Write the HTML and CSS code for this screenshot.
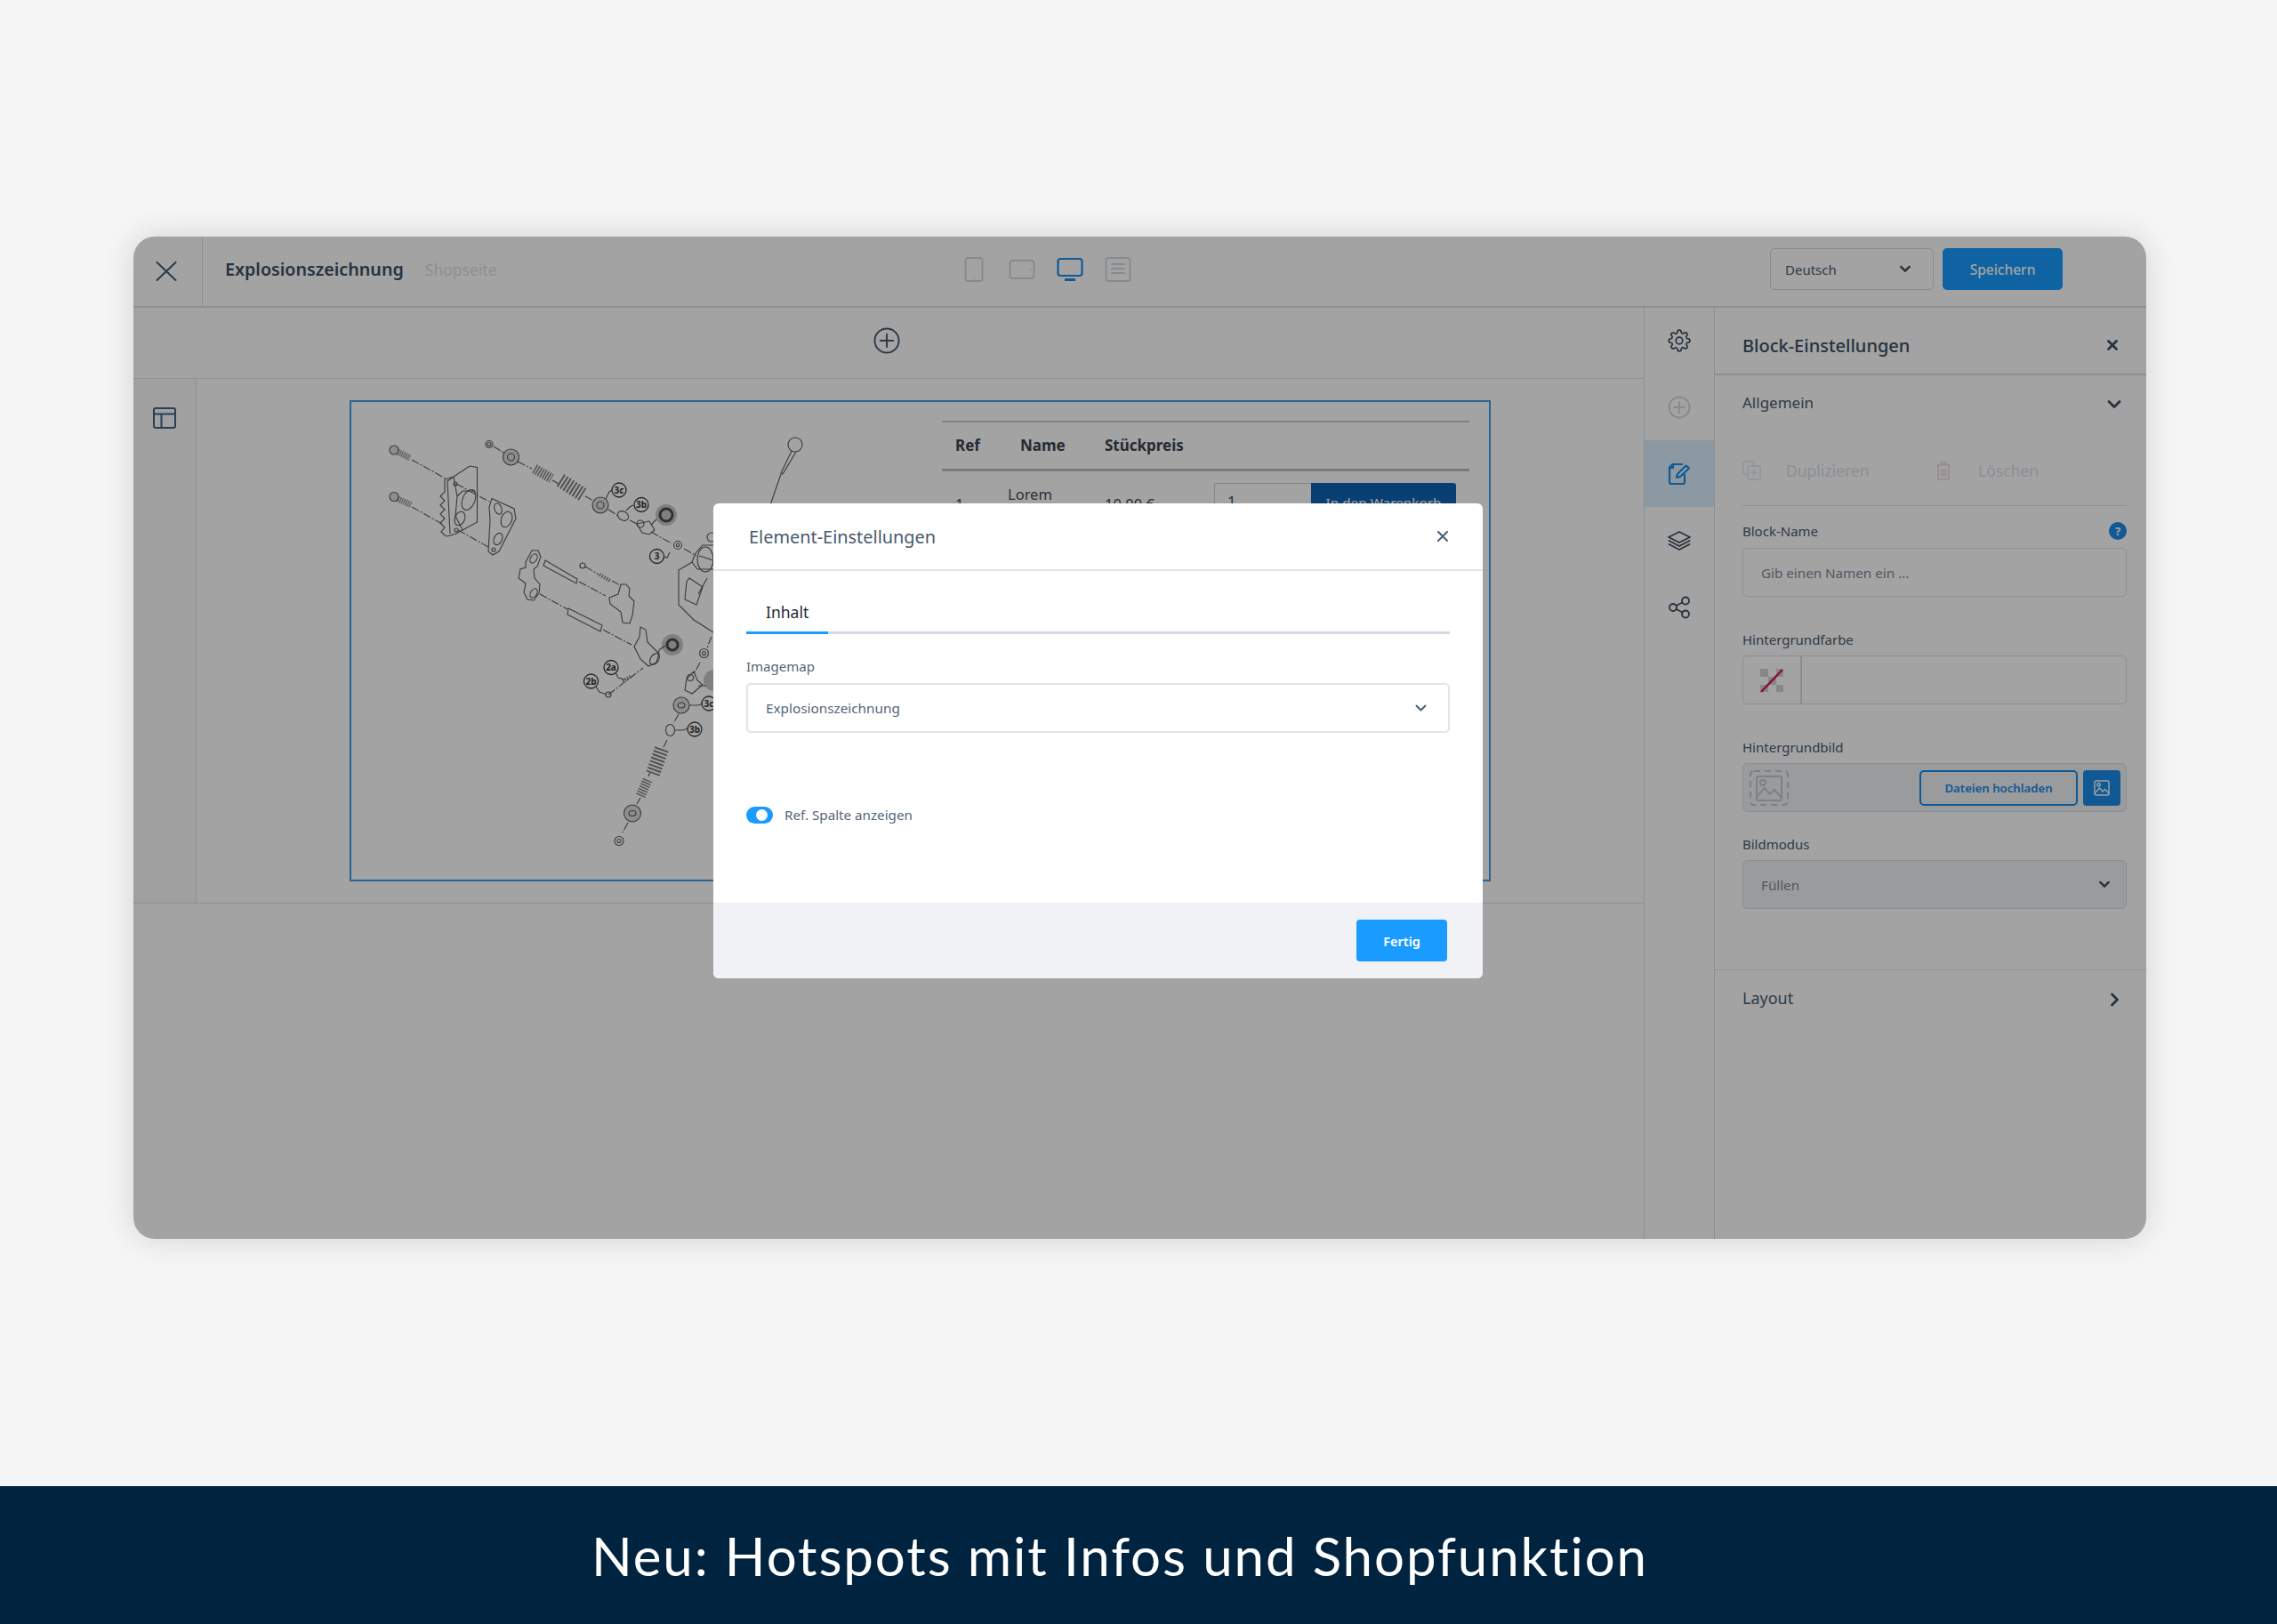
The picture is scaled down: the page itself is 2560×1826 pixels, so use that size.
FILE: index.html
```html
<!DOCTYPE html>
<html lang="de">
<head>
    <meta charset="UTF-8">
    <title>Explosionszeichnung</title>
    <link rel="stylesheet" href="styles.css">
</head>
<body>
<main class="stage-page">
<div class="app">
    <header class="topbar">
        <div class="close-cell">
            <svg width="24" height="22" viewBox="0 0 24 22"><path d="M1.500 1 22.500 21M22.500 1 1.500 21" class="ic"/></svg>
        </div>
        <div class="title-group">
            <span class="page-title">Explosionszeichnung</span>
            <span class="page-sub">Shopseite</span>
        </div>
        <div class="devices">
            <svg width="30" height="28" viewBox="0 0 30 28"><rect x="5.500" y="1" width="19" height="26" rx="3" class="ic-dis"/><circle cx="15" cy="24" r=".8" fill="#c8ced6"/></svg>
            <svg width="30" height="28" viewBox="0 0 30 28"><rect x="1.500" y="4" width="27" height="20" rx="3" class="ic-dis"/><circle cx="25" cy="14" r=".8" fill="#c8ced6"/></svg>
            <svg width="30" height="28" viewBox="0 0 30 28"><rect x="1.500" y="2" width="27" height="19" rx="3" class="ic-blue"/><rect x="9" y="24" width="12" height="3" fill="#1a8bea"/></svg>
            <svg width="30" height="28" viewBox="0 0 30 28"><rect x="1.500" y="1" width="27" height="26" rx="3" class="ic-dis"/><path d="M8 8h14M8 13h14M8 18h14" class="ic-dis" stroke-width="2"/></svg>
        </div>
        <div class="top-actions">
            <div class="lang-select">
                <span>Deutsch</span>
                <svg width="12" height="9" viewBox="0 0 14 10"><path d="M1.500 2 7 7.500 12.500 2" class="ic-bold"/></svg>
            </div>
            <button class="save-btn">Speichern</button>
        </div>
    </header>

    <div class="workspace">
        <section class="canvas">
            <div class="add-row">
                <svg width="30" height="30" viewBox="0 0 31 31"><circle cx="15.500" cy="15.500" r="14" class="ic"/><path d="M15.500 8v15M8 15.500h15" class="ic"/></svg>
            </div>
            <div class="stage">
                <div class="stage-strip">
                    <svg width="26" height="24" viewBox="0 0 26 24"><rect x="1" y="1" width="24" height="22" rx="2" class="ic-thin"/><path d="M1 7.500h24M9.500 7.500V23" class="ic-thin"/></svg>
                </div>
                <div class="block-frame">
                    <svg class="drawing" width="664" height="537" viewBox="395 452 664 537">
                        <g class="ln">
                            <!-- bolts and back plate -->
                            <path class="dash" d="M463 517 500 537.500M463 570 497 589M513 544 550 564M515 596 549 615"/>
                            <path class="shaft" d="M447 508 461 515M447 561 462 567.500"/>
                            <circle class="gr" cx="443" cy="506" r="5"/>
                            <circle class="gr" cx="443" cy="558.500" r="5"/>
                            <path d="M500 539 510 536 528 524 536.500 525.500V587L513 600 503 603 500 602 496 598 500 593 495 588 500 583 495 578 500 573 495 568 500 563 495 558 500 553 500 539Z"/>
                            <path d="M510 536 503 541 506 600M510 536 514 558 520 552 534 552M514 558 512 580 520 596"/>
                            <ellipse cx="527" cy="562" rx="7" ry="12" transform="rotate(22 527 562)"/>
                            <ellipse cx="517" cy="583" rx="5.500" ry="8" transform="rotate(22 517 583)"/>
                            <circle cx="512" cy="544" r="2"/>
                            <circle cx="513" cy="596" r="2"/>
                            <path d="M553 560.500 578 572 580 583 561 620 554 624 549 620 551 585 550 570Z"/>
                            <ellipse cx="560" cy="572" rx="4" ry="6.500" transform="rotate(-20 560 572)"/>
                            <ellipse cx="569.500" cy="584" rx="6" ry="9" transform="rotate(20 569.500 584)"/>
                            <ellipse cx="560" cy="606" rx="4.500" ry="7" transform="rotate(25 560 606)"/>
                            <circle cx="555" cy="618" r="2"/>

                            <!-- upper valve row -->
                            <path class="dash" d="M555 502 568 510M582 519 598 527M621 540 628 544M658 558 667 563M684 573 695 580M708 585 718 590M732 598 755 611M769 617 783 625"/>
                            <circle cx="550" cy="499.500" r="4"/>
                            <circle cx="550" cy="499.500" r="2"/>
                            <circle class="gr" cx="574.500" cy="514" r="9"/>
                            <circle cx="574.500" cy="514" r="4"/>
                            <path class="coil" d="M601 527 620 538"/>
                            <path class="coil big" d="M630 540 655 556"/>
                            <circle class="gr" cx="675" cy="568" r="9"/>
                            <circle cx="675" cy="568" r="4"/>
                            <path d="M681 561 685 553 688 551M704 574 708 570 712 568M732 590 738 584 742 581M753 621 750 627 746 626"/>
                            <ellipse cx="700.500" cy="580" rx="6.500" ry="5" transform="rotate(30 700.500 580)"/>
                            <path d="M716 589 730 586 736 596 730 601 722 599Z"/>
                            <circle cx="720" cy="589" r="4"/>
                            <circle cx="762" cy="613" r="4.500"/>
                            <circle cx="762" cy="613" r="1.800"/>
                            <circle class="halo" cx="749" cy="579" r="12"/>
                            <circle class="ring" cx="749" cy="579" r="7"/>

                            <!-- middle linkage -->
                            <path d="M591 632 598 619 605 619 608 626 604 637 600 640 601 650 607 657 606 667 600 675 593 674 589 666 591 656 583 650 585 640 591 638Z"/>
                            <ellipse cx="600" cy="628" rx="3.500" ry="5.500" transform="rotate(30 600 628)"/>
                            <ellipse cx="600" cy="667" rx="3.500" ry="5.500" transform="rotate(30 600 667)"/>
                            <path d="M613 630 649 651 648 656 611 636Z"/>
                            <path class="dash" d="M651 654 681 670M658 637 673 646M688 653 697 658M607 668 638 685M678 708 710 725M684 781 723 751"/>
                            <circle cx="655" cy="636" r="3"/>
                            <path class="coil thin" d="M674 646 686 653"/>
                            <path d="M698 657 704 657 708 662 707 670 713 676 711 692 708 701 700 700 698 688 686 679 685 672 695 668Z"/>
                            <path d="M639 684 677 703 675 710 638 691Z"/>
                            <path d="M720 705 726 708 728 722 741 735 738 745 729 749 720 741 713 727 719 716Z"/>
                            <ellipse cx="736" cy="741" rx="4.500" ry="7" transform="rotate(35 736 741)"/>
                            <circle class="halo" cx="756" cy="725" r="12"/>
                            <circle class="ring" cx="756" cy="725" r="6"/>
                            <path d="M739 735 742 730 748 726M692 756 695 762 702 764M670 772 674 778 682 781"/>
                            <path class="coil thin" d="M700 766 710 760"/>
                            <circle cx="684" cy="781" r="3"/>

                            <!-- housing, cut off by the dialog -->
                            <path d="M802 613 790 613 782 622 778 632 763 641 763 680 780 697 802 711"/>
                            <path d="M778 632 784 640 802 640M786 625 802 630M775 650 790 660 783 680 770 674 772 654ZM795 650 785 668"/>
                            <ellipse cx="793" cy="629" rx="9" ry="14"/>
                            <circle cx="800" cy="604" r="5"/>

                            <!-- lower valve row -->
                            <path class="dash" d="M800 716 795 728M787 745 781 756M763 803 757 813M750 832 745 842M731 868 729 873M720 897 716 904M706 925 700 936"/>
                            <circle cx="791.500" cy="734.500" r="5"/>
                            <circle cx="791.500" cy="734.500" r="2"/>
                            <path d="M772 763 780 755 784 765 790 770 778 780 770 776Z"/>
                            <circle cx="776" cy="762" r="3.500"/>
                            <circle class="halo" cx="803" cy="765" r="12"/>
                            <path d="M785 771 794 771M775 793 785 793 790 791M759 821 768 821 773 819"/>
                            <circle class="gr" cx="766" cy="793" r="9"/>
                            <ellipse cx="766" cy="793" rx="4" ry="3"/>
                            <ellipse cx="753.500" cy="821" rx="5" ry="6.500"/>
                            <path class="coil big" d="M744 842 734 870"/>
                            <path class="coil" d="M728 877 720 895"/>
                            <circle class="gr" cx="711" cy="914.500" r="9.500"/>
                            <ellipse cx="711" cy="914.500" rx="4" ry="3"/>
                            <circle cx="696" cy="945.500" r="5"/>
                            <circle cx="696" cy="945.500" r="2"/>

                            <!-- needle at the top -->
                            <circle cx="894" cy="500" r="8"/>
                            <path d="M890 507 878 532 880 533 895 508M878 533 866 568"/>
                        </g>
                        <g class="tag">
                            <circle cx="696" cy="551" r="8"/><text x="696" y="554.500">3c</text>
                            <circle cx="721" cy="567.500" r="8"/><text x="721" y="571">3b</text>
                            <circle cx="738.500" cy="625.500" r="8"/><text x="738.500" y="629">3</text>
                            <circle cx="687" cy="750.500" r="8"/><text x="687" y="754">2a</text>
                            <circle cx="664.500" cy="766" r="8"/><text x="664.500" y="769.500">2b</text>
                            <circle cx="781" cy="820" r="8"/><text x="781" y="823.500">3b</text>
                            <circle cx="797" cy="791" r="8"/><text x="797" y="794.500">3c</text>
                        </g>
                    </svg>
                    <table class="parts">
                        <thead>
                            <tr>
                                <th class="col-ref">Ref</th>
                                <th class="col-name">Name</th>
                                <th class="col-price">Stückpreis</th>
                                <th></th>
                            </tr>
                        </thead>
                        <tbody>
                            <tr>
                                <td class="col-ref cell-mid">1</td>
                                <td class="col-name">Lorem<br>ipsum</td>
                                <td class="col-price cell-mid">10,00 €</td>
                                <td class="cell-buy">
                                    <div class="buy">
                                        <span class="qty">1</span>
                                        <span class="cart">In den Warenkorb</span>
                                    </div>
                                </td>
                            </tr>
                        </tbody>
                    </table>
                </div>
            </div>
        </section>

        <nav class="rail">
            <div class="rail-item">
                <svg width="26" height="26" viewBox="0 0 24 24"><g class="ic-rail"><circle cx="12" cy="12" r="3.500"/><path d="M19.400 15a1.650 1.650 0 0 0 .33 1.820l.06.06a2 2 0 0 1 0 2.830 2 2 0 0 1-2.830 0l-.06-.06a1.650 1.650 0 0 0-1.820-.33 1.650 1.650 0 0 0-1 1.510V21a2 2 0 0 1-2 2 2 2 0 0 1-2-2v-.09A1.650 1.650 0 0 0 9 19.400a1.650 1.650 0 0 0-1.820.33l-.06.06a2 2 0 0 1-2.830 0 2 2 0 0 1 0-2.830l.06-.06a1.650 1.650 0 0 0 .33-1.820 1.650 1.650 0 0 0-1.510-1H3a2 2 0 0 1-2-2 2 2 0 0 1 2-2h.09A1.650 1.650 0 0 0 4.600 9a1.650 1.650 0 0 0-.33-1.820l-.06-.06a2 2 0 0 1 0-2.830 2 2 0 0 1 2.830 0l.06.06a1.650 1.650 0 0 0 1.820.33H9a1.650 1.650 0 0 0 1-1.510V3a2 2 0 0 1 2-2 2 2 0 0 1 2 2v.09a1.650 1.650 0 0 0 1 1.510 1.650 1.650 0 0 0 1.820-.33l.06-.06a2 2 0 0 1 2.830 0 2 2 0 0 1 0 2.830l-.06.06a1.650 1.650 0 0 0-.33 1.820V9a1.650 1.650 0 0 0 1.510 1H21a2 2 0 0 1 2 2 2 2 0 0 1-2 2h-.09a1.650 1.650 0 0 0-1.510 1z"/></g></svg>
            </div>
            <div class="rail-item">
                <svg width="26" height="26" viewBox="0 0 26 26"><circle cx="13" cy="13" r="11.500" class="ic-dis2"/><path d="M13 7v12M7 13h12" class="ic-dis2"/></svg>
            </div>
            <div class="rail-item rail-active">
                <svg width="26" height="26" viewBox="0 0 26 26"><path d="M16 2H5.500L2 5.500V22a2 2 0 0 0 2 2h13a2 2 0 0 0 2-2v-8" class="ic-blue"/><path d="M2 6h4V2" class="ic-blue" stroke-width="1.500"/><path d="M10 17l1-4L20.500 3.500l3.500 3L14 16z" class="ic-blue"/></svg>
            </div>
            <div class="rail-item">
                <svg width="26" height="24" viewBox="0 0 26 24"><path d="M13 2 25 8 13 14 1 8Z" class="ic-thin-dark"/><path d="M1.500 12 13 18 24.500 12M1.500 16 13 22 24.500 16" class="ic-thin-dark"/></svg>
            </div>
            <div class="rail-item">
                <svg width="26" height="26" viewBox="0 0 26 26"><circle cx="6" cy="13" r="4" class="ic-thin-dark"/><circle cx="20" cy="5.500" r="4" class="ic-thin-dark"/><circle cx="20" cy="20.500" r="4" class="ic-thin-dark"/><path d="M9.500 11 16.500 7.500M9.500 15l7 3.500" class="ic-thin-dark"/></svg>
            </div>
        </nav>

        <aside class="panel">
            <div class="panel-head">
                <span class="panel-title">Block-Einstellungen</span>
                <svg width="12" height="12" viewBox="0 0 12 12"><path d="M1.500 1.500l9 9M10.500 1.500l-9 9" class="ic-bold"/></svg>
            </div>
            <div class="panel-body">
                <div class="acc-row">
                    <span>Allgemein</span>
                    <svg class="acc-icon" width="16" height="11" viewBox="0 0 16 11"><path d="M2 2.500 8 8.500 14 2.500" class="ic-bold"/></svg>
                </div>
                <div class="block-actions">
                    <div class="act act-copy">
                        <svg width="21" height="22" viewBox="0 0 21 22"><path d="M4 15H2.500A1.500 1.500 0 0 1 1 13.500V2.500A1.500 1.500 0 0 1 2.500 1h9A1.500 1.500 0 0 1 13 2.500V5" class="ic-act"/><rect x="6" y="6" width="14" height="15" rx="1.500" class="ic-act"/><path d="M13 10v7M9.500 13.500h7" class="ic-act"/></svg>
                        <span>Duplizieren</span>
                    </div>
                    <div class="act">
                        <svg width="16" height="22" viewBox="0 0 16 22"><path d="M1 5h14M5 5V2h6v3M2 5v15a1 1 0 0 0 1 1h10a1 1 0 0 0 1-1V5M5.500 10v7M8 10v7M10.500 10v7" class="ic-red"/></svg>
                        <span>Löschen</span>
                    </div>
                </div>
                <div class="field field-first">
                    <div class="label-row">
                        <label class="field-label">Block-Name</label>
                        <span class="help">?</span>
                    </div>
                    <div class="input"><span class="placeholder">Gib einen Namen ein ...</span></div>
                </div>
                <div class="field field-color">
                    <label class="field-label">Hintergrundfarbe</label>
                    <div class="input color-input">
                        <div class="swatch">
                            <svg width="28" height="28" viewBox="0 0 28 28"><path d="M1 1h9v9H1zM19 1h8v9h-8zM10 10h9v9h-9zM1 19h9v8H1zM19 19h8v8h-8z" fill="#d0d3d8"/><path d="M2 27 26 2" stroke="#e0153d" stroke-width="2.500" fill="none"/></svg>
                        </div>
                    </div>
                </div>
                <div class="field">
                    <label class="field-label">Hintergrundbild</label>
                    <div class="input image-input">
                        <svg class="img-ph" width="44" height="40" viewBox="0 0 44 40"><rect x="1" y="1" width="42" height="38" rx="4" class="ph-dash"/><rect x="8" y="7" width="28" height="27" rx="2" class="ph-line"/><circle cx="15" cy="14" r="3" class="ph-line"/><path d="M8 30 17 20 23 27 28 22 36 31" class="ph-line"/></svg>
                        <button class="upload-btn">Dateien hochladen</button>
                        <button class="media-btn">
                            <svg width="18" height="18" viewBox="0 0 18 18"><rect x="1" y="1" width="16" height="16" rx="1.500" class="ic-white"/><circle cx="5.500" cy="5.500" r="1.700" class="ic-white"/><path d="M1 15 6.500 9 10 13 12.500 10.500 17 15" class="ic-white"/></svg>
                        </button>
                    </div>
                </div>
                <div class="field field-tight">
                    <label class="field-label">Bildmodus</label>
                    <div class="input select-fill">
                        <span class="placeholder">Füllen</span>
                        <svg width="12" height="9" viewBox="0 0 14 10"><path d="M1.500 2 7 7.500 12.500 2" class="ic-bold"/></svg>
                    </div>
                </div>
            </div>
            <div class="layout-row">
                <span>Layout</span>
                <svg class="layout-icon" width="11" height="16" viewBox="0 0 11 16"><path d="M2.500 2 8.500 8 2.500 14" class="ic-bold"/></svg>
            </div>
        </aside>
    </div>

    <div class="overlay"></div>

    <div class="modal">
        <div class="modal-head">
            <span class="modal-title">Element-Einstellungen</span>
            <svg width="12" height="12" viewBox="0 0 12 12"><path d="M1 1l10 10M11 1 1 11" class="ic-modal"/></svg>
        </div>
        <div class="modal-body">
            <div class="tabs"><span class="tab">Inhalt</span></div>
            <label class="modal-label">Imagemap</label>
            <div class="modal-select">
                <span>Explosionszeichnung</span>
                <svg width="13" height="9" viewBox="0 0 13 9"><path d="M1.500 1.500 6.500 6.500 11.500 1.500" class="ic-modal"/></svg>
            </div>
            <div class="toggle-row">
                <span class="toggle"></span>
                <span class="toggle-label">Ref. Spalte anzeigen</span>
            </div>
        </div>
        <div class="modal-foot">
            <button class="done-btn">Fertig</button>
        </div>
    </div>
</div>
</main>
<footer class="banner">Neu: Hotspots mit Infos und Shopfunktion</footer>
</body>
</html>
```

FILE: styles.css
```css
/* Page */
* {
    box-sizing: border-box;
}

body {
    margin: 0;
    height: 1826px;
    display: flex;
    flex-direction: column;
    background-color: #f5f5f5;
    font-family: "Noto Sans", sans-serif;
    color: #425367;
}

.stage-page {
    flex: 1;
    padding: 266px 0 0 150px;
}

button {
    font-family: inherit;
    border: 0;
    padding: 0;
}

/* Icon strokes */
.ic, .ic-thin, .ic-thin-dark, .ic-rail, .ic-bold, .ic-dis, .ic-dis2, .ic-blue, .ic-act, .ic-red, .ic-white, .ic-modal {
    fill: none;
    stroke-linecap: round;
    stroke-linejoin: round;
}
.ic { stroke: #465a70; stroke-width: 2; }
.ic-thin { stroke: #3f6486; stroke-width: 2; }
.ic-thin-dark, .ic-rail { stroke: #3e4f60; stroke-width: 1.8; }
.ic-rail { stroke-width: 1.600; }
.ic-bold { stroke: #3e4f60; stroke-width: 2.800; }
.ic-dis { stroke: #d3d8de; stroke-width: 2; }
.ic-dis2 { stroke: #d3d8de; stroke-width: 2; }
.ic-blue { stroke: #1a8bea; stroke-width: 2.200; }
.ic-act { stroke: #dde8f2; stroke-width: 1.500; }
.ic-red { stroke: #eed3d8; stroke-width: 1.500; }
.ic-white { stroke: #fff; stroke-width: 1.400; }
.ic-modal { stroke: #4a5e75; stroke-width: 2; }

/* App window */
.app {
    position: relative;
    width: 2263px;
    height: 1127px;
    border-radius: 24px;
    background: #fff;
    box-shadow: 0 0 36px rgba(0, 0, 0, 0.14);
    overflow: hidden;
    display: flex;
    flex-direction: column;
}

.overlay {
    position: absolute;
    inset: 0;
    background: rgba(0, 0, 0, 0.36);
}

/* Top bar */
.topbar {
    height: 80px;
    display: flex;
    align-items: center;
    border-bottom: 2px solid #d8e2ec;
}

.close-cell {
    width: 78px;
    height: 100%;
    display: flex;
    align-items: center;
    justify-content: center;
    padding-right: 3px;
    border-right: 1px solid #dfe4ea;
}

.title-group {
    width: 852px;
    margin-bottom: 5px;
    padding-left: 25px;
    display: flex;
    align-items: baseline;
    gap: 24px;
}

.page-title {
    font-size: 19.700px;
    font-weight: 600;
    color: #3d4f62;
}

.page-sub {
    font-size: 17.500px;
    color: #d9e1ea;
}

.devices {
    margin-bottom: 5px;
    display: flex;
    gap: 24px;
}

.top-actions {
    margin-left: auto;
    margin-right: 94px;
    margin-bottom: 5px;
    display: flex;
    gap: 10px;
}

.lang-select {
    width: 184px;
    height: 47px;
    padding: 0 25px 0 16px;
    display: flex;
    align-items: center;
    justify-content: space-between;
    border: 1px solid #d3dbe3;
    border-radius: 5px;
    font-size: 15px;
    color: #4b5c70;
}

.save-btn {
    width: 135px;
    height: 47px;
    border-radius: 5px;
    background: #1a9bff;
    color: #fff;
    font-size: 15.500px;
    font-weight: 500;
}

/* Workspace */
.workspace {
    flex: 1;
    display: flex;
    min-height: 0;
}

.canvas {
    width: 1698px;
}

.add-row {
    height: 80px;
    display: flex;
    align-items: center;
    justify-content: center;
    padding-right: 4px;
    padding-bottom: 5px;
    border-bottom: 1px solid #dce5ec;
}

.stage {
    height: 590px;
    display: flex;
    border-bottom: 1px solid #dce5ec;
}

.stage-strip {
    width: 72px;
    padding: 32px 0 0 22px;
    background: #fbfbfb;
    border-right: 3px solid #f0f1f2;
}

.stage-strip svg {
    display: block;
}

.block-frame {
    margin: 24px 0 0 171px;
    width: 1283px;
    height: 541px;
    display: flex;
    border: 2px solid #3d9be6;
}

.drawing {
    flex: none;
}

/* Exploded drawing */
.ln * {
    fill: none;
    stroke: #5a5a5a;
    stroke-width: 1.100;
}
.ln .dash { stroke-dasharray: 9 2 2 2; }
.ln .shaft { stroke-width: 7; stroke: #9a9a9a; stroke-dasharray: 1.500 1; }
.ln .gr { fill: #dedede; }
.ln .coil { stroke-width: 11; stroke: #808080; stroke-dasharray: 1.500 1.500; }
.ln .coil.big { stroke-width: 16; stroke-dasharray: 2 2; }
.ln .coil.thin { stroke-width: 4; }
.ln .halo { fill: #c8c8c8; stroke: none; }
.ln .ring { stroke: #4a4a4a; stroke-width: 3; }

.tag circle {
    fill: none;
    stroke: #3a3a3a;
    stroke-width: 1.300;
}
.tag text {
    font-family: "Noto Sans", sans-serif;
    font-size: 10px;
    font-weight: 700;
    text-anchor: middle;
    fill: #333;
}

/* Parts table */
.parts {
    width: 593px;
    height: 120px;
    margin-top: 21px;
    border-collapse: collapse;
    table-layout: fixed;
    font-size: 16.500px;
    color: #3f4a55;
}

.parts th {
    height: 54px;
    text-align: left;
    font-size: 17px;
    font-weight: 700;
    color: #3a4450;
    border-top: 2px solid #c9ced3;
    border-bottom: 3px solid #b9bfc5;
}

.parts td {
    vertical-align: top;
    padding-top: 13px;
    line-height: 26px;
}

.parts td.cell-mid {
    padding-top: 25px;
    line-height: 24px;
}

.parts td.cell-buy {
    padding-top: 13px;
}

.col-ref { width: 55px; padding-left: 15px; }
.col-name { width: 127px; padding-left: 19px; }
.col-price { width: 123px; }
.parts th.col-name { padding-left: 33px; }

.buy {
    display: flex;
    height: 46px;
}

.qty {
    width: 109px;
    padding: 7px 0 0 14px;
    border: 1px solid #c9d0d8;
    border-right: 0;
    border-radius: 3px 0 0 3px;
}

.cart {
    width: 163px;
    padding-top: 9px;
    text-align: center;
    font-size: 15.300px;
    color: #fff;
    background: #0f63b2;
    border-radius: 0 3px 3px 0;
}

/* Icon rail */
.rail {
    width: 80px;
    border-left: 1px solid #dbe0e5;
    border-right: 1px solid #dbe0e5;
}

.rail-item {
    height: 75px;
    display: flex;
    align-items: center;
    justify-content: center;
}

.rail-item:first-child {
    height: 74px;
}

.rail-active {
    background: #dcf0ff;
}

/* Settings panel */
.panel {
    flex: 1;
    display: flex;
    flex-direction: column;
}

.panel-head {
    height: 76px;
    padding: 10px 32px 0 31px;
    display: flex;
    align-items: center;
    justify-content: space-between;
    border-bottom: 2px solid #d8e2ec;
}

.panel-title {
    font-size: 20px;
    font-weight: 500;
    color: #3d4f62;
}

.panel-body {
    padding: 0 22px 0 31px;
    height: 669px;
    border-bottom: 1px solid #dce5ec;
}

.acc-row {
    height: 61px;
    margin-bottom: 3px;
    display: flex;
    align-items: center;
    justify-content: space-between;
    font-size: 17px;
    color: #4b5c70;
}

.acc-icon {
    margin: 3px 6px 0 0;
}

.block-actions {
    height: 83px;
    padding-top: 3px;
    display: flex;
    align-items: center;
    gap: 0;
    border-bottom: 1px solid #dce3ea;
}

.act {
    display: flex;
    align-items: center;
    gap: 31px;
    font-size: 17.500px;
    color: #d9e1ea;
}

.act-copy {
    width: 218px;
    gap: 28px;
}

.field {
    margin-top: 38px;
}

.field-first {
    margin-top: 18px;
}

.field-color {
    margin-top: 38px;
}

.field-tight {
    margin-top: 26px;
}

.field-label {
    display: block;
    height: 20px;
    margin-bottom: 8px;
    font-size: 15px;
    line-height: 20px;
    color: #4b5c70;
}

.label-row {
    display: flex;
    justify-content: space-between;
}

.label-row .field-label {
    margin-bottom: 9px;
}

.help {
    width: 20px;
    height: 20px;
    border-radius: 50%;
    background: #1a8bea;
    color: #fff;
    font-size: 13px;
    font-weight: 700;
    line-height: 20px;
    text-align: center;
}

.input {
    height: 55px;
    padding: 0 20px;
    display: flex;
    align-items: center;
    border: 1px solid #d8dfe6;
    border-radius: 5px;
}

.placeholder {
    font-size: 15.200px;
    color: #7d8b9a;
}

.color-input {
    padding: 0;
}

.swatch {
    width: 66px;
    height: 100%;
    display: flex;
    align-items: center;
    justify-content: center;
    border-right: 2px solid #d8dfe6;
}

.image-input {
    padding: 0 6px 0 7px;
    background: #f0f2f5;
}

.img-ph {
    margin-right: auto;
}

.ph-dash, .ph-line {
    fill: none;
    stroke: #c4cad1;
    stroke-width: 2;
}
.ph-dash { stroke-dasharray: 7 5; }

.upload-btn {
    width: 178px;
    height: 40px;
    margin-right: 6px;
    border: 2px solid #1a8bea;
    border-radius: 5px;
    background: transparent;
    color: #1a8bea;
    font-size: 13.200px;
    font-weight: 600;
}

.media-btn {
    width: 42px;
    height: 40px;
    display: flex;
    align-items: center;
    justify-content: center;
    border-radius: 4px;
    background: #1a8bea;
}

.select-fill {
    justify-content: space-between;
    padding-right: 18px;
    background: #f0f2f5;
}

.layout-row {
    padding: 19px 30px 0 31px;
    display: flex;
    justify-content: space-between;
    align-items: center;
    font-size: 18px;
    color: #4b5c70;
}

.layout-icon {
    margin-top: 3px;
}

/* Dialog */
.modal {
    position: absolute;
    left: 652px;
    top: 300px;
    width: 865px;
    height: 534px;
    display: flex;
    flex-direction: column;
    background: #fff;
    border-radius: 6px;
    overflow: hidden;
}

.modal-head {
    height: 76px;
    padding: 0 39px 0 40px;
    display: flex;
    align-items: center;
    justify-content: space-between;
    border-bottom: 2px solid #e0e5ea;
}

.modal-title {
    font-size: 19.900px;
    color: #4a5a6c;
}

.modal-body {
    flex: 1;
    padding: 0 37px;
}

.tabs {
    height: 71px;
    display: flex;
    align-items: flex-end;
    border-bottom: 3px solid #d3dae1;
}

.tab {
    width: 92px;
    height: 46px;
    margin-bottom: -3px;
    padding-left: 22px;
    font-size: 17.500px;
    line-height: 42px;
    color: #1f2a35;
    border-bottom: 3px solid #1a9bff;
}

.modal-label {
    display: block;
    margin-top: 26px;
    height: 20px;
    font-size: 15px;
    line-height: 20px;
    color: #566578;
}

.modal-select {
    height: 56px;
    margin-top: 9px;
    padding: 0 24px 0 20px;
    display: flex;
    align-items: center;
    justify-content: space-between;
    border: 2px solid #e0e5ea;
    border-radius: 5px;
    font-size: 15.300px;
    color: #566578;
}

.toggle-row {
    margin-top: 82px;
    display: flex;
    align-items: center;
    gap: 13px;
}

.toggle {
    position: relative;
    width: 30px;
    height: 19px;
    border-radius: 10px;
    background: #1a9bff;
}

.toggle::after {
    content: "";
    position: absolute;
    left: 11px;
    top: 3px;
    width: 13px;
    height: 13px;
    border-radius: 50%;
    background: #fff;
}

.toggle-label {
    font-size: 15.200px;
    color: #566578;
}

.modal-foot {
    height: 85px;
    padding-right: 40px;
    display: flex;
    align-items: center;
    justify-content: flex-end;
    background: #f0f2f5;
}

.done-btn {
    width: 102px;
    height: 47px;
    border-radius: 4px;
    background: #1a9bff;
    color: #fff;
    font-size: 14.500px;
    font-weight: 600;
}

/* Caption */
.banner {
    height: 155px;
    padding-left: 665px;
    display: flex;
    align-items: center;
    background: #00233f;
    color: #fff;
    font-family: Lato, sans-serif;
    font-size: 60px;
    letter-spacing: 1.900px;
}
```
